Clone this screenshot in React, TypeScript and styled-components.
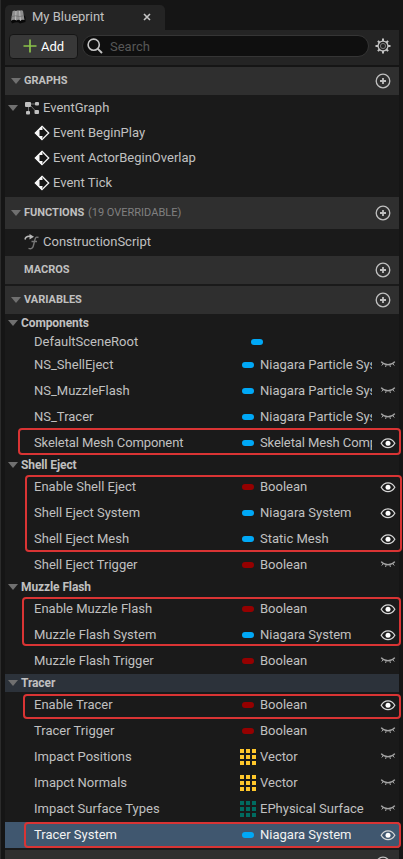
import React from "react";
import styled, { createGlobalStyle, css } from "styled-components";

const GlobalStyle = createGlobalStyle`
  html, body { margin: 0; padding: 0; background: #151515; overflow: hidden; }
  * { box-sizing: border-box; }
`;

const Page = styled.div`
  width: 403px;
  height: 859px;
  overflow: hidden;
  background: #151515;
  border-left: 1px solid #2b2b2b;
  padding: 5px 4px 0;
  font-family: Roboto, "Liberation Sans", sans-serif;
  font-size: 13px;
  color: #c0c0c0;
  white-space: nowrap;
`;

const Tab = styled.div`
  display: flex;
  align-items: center;
  width: 160px;
  height: 25px;
  padding: 0 14px 2px 5px;
  background: #242424;
  border-radius: 5px 5px 0 0;
`;

const TabTitle = styled.span`
  flex: 1;
  margin-left: 6px;
`;

const Toolbar = styled.div`
  display: flex;
  align-items: center;
  height: 35px;
  padding: 0 8px 3px 4px;
  background: #242424;
`;

const AddButton = styled.button`
  display: flex;
  align-items: center;
  justify-content: center;
  gap: 4px;
  width: 69px;
  height: 25px;
  padding: 0;
  border: 1px solid #151515;
  border-radius: 4px;
  background: #383838;
  color: #fff;
  font: inherit;
`;

const SearchBox = styled.div`
  display: flex;
  align-items: center;
  gap: 7px;
  width: 287px;
  height: 22px;
  margin: 0 6px 0 4px;
  padding-left: 4px;
  border: 1px solid #353535;
  border-radius: 11px;
  background: #0f0f0f;
  color: #575757;
`;

const SectionBar = styled.div<{ $tall?: boolean; $gap?: boolean }>`
  display: flex;
  align-items: center;
  height: ${(p) => (p.$tall ? 32 : 28)}px;
  margin-top: ${(p) => (p.$gap ? 2 : 0)}px;
  padding: 0 8px 0 6px;
  background: #2f2f2f;
`;

const SectionTitle = styled.span`
  flex: 1;
  margin-left: 3px;
  padding-bottom: 2px;
  font-size: 11px;
  font-weight: 700;
`;

const Muted = styled.span`
  font-weight: 400;
  color: #808080;
  margin-left: 1px;
`;

const Body = styled.div`
  background: #1a1a1a;
`;

const TreeRow = styled.div<{ $indent: number }>`
  display: flex;
  align-items: center;
  height: 25px;
  padding-left: ${(p) => p.$indent}px;
`;

const TreeLabel = styled.span<{ $gap?: number }>`
  margin-left: ${(p) => p.$gap ?? 4}px;
`;

const TreeList = styled.div<{ $bottom: number }>`
  padding-bottom: ${(p) => p.$bottom}px;
`;

const Category = styled.div<{ $hover?: boolean }>`
  display: flex;
  align-items: center;
  gap: 3px;
  height: 18px;
  padding-left: 3px;
  font-size: 12px;
  font-weight: 700;
  letter-spacing: -0.1px;
  background: ${(p) => (p.$hover ? "#2c323a" : "transparent")};
`;

const VariableRow = styled.div<{ $short?: boolean; $selected?: boolean }>`
  display: grid;
  grid-template-columns: 201px 25px 112px 1fr;
  align-items: center;
  height: ${(p) => (p.$short ? 20 : 26)}px;
  padding-left: 29px;
  ${(p) =>
    p.$selected &&
    css`
      background: #40576f;
      color: #f2f2f2;
    `}
`;

const VariableName = styled.span<{ $tight?: boolean }>`
  padding-bottom: 2px;
  letter-spacing: ${(p) => (p.$tight ? -0.1 : 0)}px;
`;

const TypeName = styled(VariableName)`
  overflow: hidden;
`;

const PinCell = styled.span<{ $shift?: boolean }>`
  display: flex;
  padding-left: ${(p) => (p.$shift ? 16 : 7)}px;
`;

const ArrayCell = styled.span`
  display: flex;
  padding-left: 5px;
`;

const Pill = styled.span<{ $color: string }>`
  flex: none;
  width: 12px;
  height: 6px;
  border-radius: 3px;
  background: ${(p) => p.$color};
`;

const EyeCell = styled.span`
  display: flex;
  padding-left: 8px;
`;

/* Red marker outlining a run of variable rows. */
const Marked = styled.div<{ $l: number; $r: number; $t: number; $b: number }>`
  position: relative;
  &::after {
    content: "";
    position: absolute;
    left: ${(p) => p.$l}px;
    right: ${(p) => p.$r}px;
    top: ${(p) => p.$t}px;
    bottom: ${(p) => p.$b}px;
    border: 2px solid #d93434;
    border-radius: 4px;
  }
`;

const Arrow = () => (
  <svg width="10" height="6" viewBox="0 0 10 6">
    <path d="M0 0H10L5 6Z" fill="#707070" />
  </svg>
);

const ArrowSpace = styled.span`
  width: 10px;
`;

const PlusCircle = () => (
  <svg width="16" height="16" viewBox="0 0 16 16" fill="none" stroke="#c0c0c0">
    <circle cx="8" cy="8" r="6.8" strokeWidth="1.3" />
    <path d="M8 5V11M5 8H11" strokeWidth="1.8" />
  </svg>
);

const Gear = () => (
  <svg width="16" height="16" viewBox="0 0 16 16" fill="none" stroke="#c4c4c4">
    <path
      d="M8 .5V3M8 13V15.5M.5 8H3M13 8H15.5M2.9 2.9L4.5 4.5M11.5 11.5L13.1 13.1M2.9 13.1L4.5 11.5M11.5 4.5L13.1 2.9"
      strokeWidth="2"
    />
    <circle cx="8" cy="8" r="4.9" strokeWidth="1.3" />
    <circle cx="8" cy="8" r="2.6" stroke="#777" strokeWidth="1" />
  </svg>
);

const Magnifier = () => (
  <svg width="16" height="16" viewBox="0 0 16 16" fill="none" stroke="#c4c4c4" strokeWidth="1.6">
    <circle cx="6.7" cy="6.7" r="5.6" />
    <path d="M10.6 10.6L15 15" strokeWidth="1.9" />
  </svg>
);

const AddPlus = () => (
  <svg width="14" height="14" viewBox="0 0 14 14" stroke="#8bc24a" strokeWidth="1.7">
    <path d="M7 .5V13.5M.5 7H13.5" />
  </svg>
);

const BlueprintIcon = () => (
  <svg width="16" height="16" viewBox="0 0 16 16">
    <path d="M.5 11L2 14.500Q8 12 10 14.500L15.500 13V8L13 5Z" fill="#080808" />
    <path d="M2.500 2.200Q4.500.8 6 2Q8 .6 9.500 1.700Q11.500.6 13 1.800L14.500 11Q12 10 10.500 11.700Q8.500 10 6.500 11.500Q4 10 1 11.700Z" fill="#8f8f8f" />
    <path d="M6 2L5.500 11M9.500 1.700L10.500 11.500" stroke="#bdbdbd" strokeWidth="1" />
    <path d="M1.700 7.500L5.500 6.800L9.500 7.500L14 6.700" stroke="#6c6c6c" strokeWidth=".7" fill="none" />
  </svg>
);

const CloseIcon = () => (
  <svg width="8" height="8" viewBox="0 0 8 8" stroke="#c6c6c6" strokeWidth="1.6">
    <path d="M1 1L7 7M7 1L1 7" />
  </svg>
);

const GraphIcon = () => (
  <svg width="14" height="14" viewBox="0 0 14 14" fill="#c0c0c0">
    <path d="M3.5 4V12M4 3H11M5 4L11.5 11" stroke="#707070" strokeWidth="1" />
    <rect x="0" y="1" width="6" height="5" rx="1" />
    <rect x="10" y="1" width="4" height="3.5" rx="1" />
    <rect x="1" y="10" width="4" height="3.5" rx="1" />
    <rect x="9.5" y="9" width="4.5" height="4" rx="1" />
  </svg>
);

const EventIcon = () => (
  <svg width="16" height="16" viewBox="0 0 16 16">
    <path d="M8 1.3L14.7 8L8 14.7L1.3 8Z" fill="#161616" stroke="#f4f4f4" strokeWidth="1.3" />
    <path d="M8 1L1 8L8 15V11H5.5V5H8Z" fill="#f7f7f7" />
    <path d="M8 3.2V5M8 11V12.8" stroke="#f7f7f7" strokeWidth="1" />
  </svg>
);

const FunctionIcon = () => (
  <svg width="15" height="16" viewBox="0 0 15 16" fill="none">
    <path d="M1 5.500C1.500 3 4 2 7 2.500" stroke="#b9b9b9" strokeWidth="1.500" />
    <path d="M5.500 0L10 2.700L5.500 5.500Z" fill="#b9b9b9" />
    <path d="M14.500 3.500C12.500 2.600 11.500 3.200 11 5.300L9.300 12C8.700 14.500 7 15.300 4.500 14.300M7.500 7.500H13" stroke="#777" strokeWidth="1.400" />
  </svg>
);

const EyeOpen = () => (
  <svg width="16" height="12" viewBox="0 0 16 12" fill="none">
    <path d="M1.200 6.300C4.400.5 11.600.5 14.800 6.300C11.600 12.100 4.400 12.100 1.200 6.300Z" stroke="#d6d6d6" strokeWidth="1.300" />
    <circle cx="8" cy="6.300" r="2.500" fill="#fff" />
  </svg>
);

const EyeClosed = () => (
  <svg width="16" height="12" viewBox="0 0 16 12" fill="none" stroke="#a6a6a6">
    <path d="M1.2 2.6C4.6 6.7 11.4 6.7 14.8 2.6" strokeWidth="1.4" />
    <path d="M3.300 4.600L1.700 6.500M6.200 5.600L5.600 8M9.800 5.600L10.400 8M12.700 4.600L14.300 6.500" strokeWidth="1" />
  </svg>
);

const ArrayGrid = ({ color }: { color: string }) => (
  <svg width="16" height="16" viewBox="0 0 16 16" fill={color}>
    {[0, 6, 12].map((y) => [0, 6, 12].map((x) => <rect key={`${x}-${y}`} x={x} y={y} width="4" height="4" />))}
  </svg>
);

const BLUE = "#00a8f6";
const RED = "#950000";

type VariableProps = {
  name: string;
  type?: string;
  color?: string;
  array?: boolean;
  open?: boolean;
  selected?: boolean;
  tight?: boolean;
};

const Variable = ({ name, type, color = BLUE, array, open, selected, tight }: VariableProps) => (
  <VariableRow $short={!type} $selected={selected}>
    <VariableName $tight={tight}>{name}</VariableName>
    {array ? (
      <ArrayCell>
        <ArrayGrid color={color} />
      </ArrayCell>
    ) : (
      <PinCell $shift={!type}>
        <Pill $color={color} />
      </PinCell>
    )}
    <TypeName $tight={tight}>{type}</TypeName>
    {type && <EyeCell>{open ? <EyeOpen /> : <EyeClosed />}</EyeCell>}
  </VariableRow>
);

const Section = ({ title, note, tall, gap, leaf }: { title: string; note?: string; tall?: boolean; gap?: boolean; leaf?: boolean }) => (
  <SectionBar $tall={tall} $gap={gap}>
    {leaf ? <ArrowSpace /> : <Arrow />}
    <SectionTitle>
      {title} {note && <Muted>{note}</Muted>}
    </SectionTitle>
    <PlusCircle />
  </SectionBar>
);

const Group = ({ title, hover }: { title: string; hover?: boolean }) => (
  <Category $hover={hover}>
    <Arrow />
    {title}
  </Category>
);

const EVENTS = ["Event BeginPlay", "Event ActorBeginOverlap", "Event Tick"];

export default function App() {
  return (
    <Page>
      <GlobalStyle />
      <Tab>
        <BlueprintIcon />
        <TabTitle>My Blueprint</TabTitle>
        <CloseIcon />
      </Tab>
      <Toolbar>
        <AddButton>
          <AddPlus />
          Add
        </AddButton>
        <SearchBox>
          <Magnifier />
          Search
        </SearchBox>
        <Gear />
      </Toolbar>
      <Body>
        <Section title="GRAPHS" gap />
        <TreeList $bottom={2}>
          <TreeRow $indent={3}>
            <Arrow />
            <TreeRow $indent={7}>
              <GraphIcon />
              <TreeLabel>EventGraph</TreeLabel>
            </TreeRow>
          </TreeRow>
          {EVENTS.map((name) => (
            <TreeRow key={name} $indent={29}>
              <EventIcon />
              <TreeLabel $gap={3}>{name}</TreeLabel>
            </TreeRow>
          ))}
        </TreeList>
        <Section title="FUNCTIONS" note="(19 OVERRIDABLE)" tall />
        <TreeRow $indent={19}>
          <FunctionIcon />
          <TreeLabel>ConstructionScript</TreeLabel>
        </TreeRow>
        <Section title="MACROS" gap leaf />
        <Section title="VARIABLES" gap />

        <Group title="Components" />
        <Variable name="DefaultSceneRoot" />
        <Variable name="NS_ShellEject" type="Niagara Particle System" />
        <Variable name="NS_MuzzleFlash" type="Niagara Particle System" />
        <Variable name="NS_Tracer" type="Niagara Particle System" />
        <Marked $l={13} $r={-2} $t={-2} $b={1}>
          <Variable name="Skeletal Mesh Component" type="Skeletal Mesh Component" open tight />
        </Marked>

        <Group title="Shell Eject" />
        <Marked $l={20} $r={-3} $t={1} $b={0}>
          <Variable name="Enable Shell Eject" type="Boolean" color={RED} open />
          <Variable name="Shell Eject System" type="Niagara System" open />
          <Variable name="Shell Eject Mesh" type="Static Mesh" open />
        </Marked>
        <Variable name="Shell Eject Trigger" type="Boolean" color={RED} />

        <Group title="Muzzle Flash" />
        <Marked $l={17} $r={-2} $t={1} $b={2}>
          <Variable name="Enable Muzzle Flash" type="Boolean" color={RED} open />
          <Variable name="Muzzle Flash System" type="Niagara System" open />
        </Marked>
        <Variable name="Muzzle Flash Trigger" type="Boolean" color={RED} />

        <Group title="Tracer" hover />
        <Marked $l={18} $r={-2} $t={2} $b={-1}>
          <Variable name="Enable Tracer" type="Boolean" color={RED} open />
        </Marked>
        <Variable name="Tracer Trigger" type="Boolean" color={RED} />
        <Variable name="Impact Positions" type="Vector" color="#ffc72b" array />
        <Variable name="Imapct Normals" type="Vector" color="#ffc72b" array />
        <Variable name="Impact Surface Types" type="EPhysical Surface" color="#006b60" array />
        <Marked $l={19} $r={-2} $t={0} $b={0}>
          <Variable name="Tracer System" type="Niagara System" open selected />
        </Marked>
        <Section title="" gap leaf />
      </Body>
    </Page>
  );
}
